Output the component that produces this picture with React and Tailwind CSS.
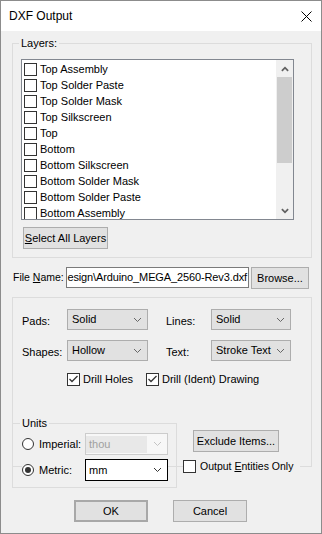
import React from "react";

const layers = [
    "Top Assembly",
    "Top Solder Paste",
    "Top Solder Mask",
    "Top Silkscreen",
    "Top",
    "Bottom",
    "Bottom Silkscreen",
    "Bottom Solder Mask",
    "Bottom Solder Paste",
    "Bottom Assembly",
];

function Chevron({ up, color = "#666666", width = 9, thick }) {
    const pts = up ? "1,5 4.5,1.5 8,5" : "1,1 4.5,4.5 8,1";
    return (
        <svg width={width} height="6" viewBox="0 0 9 6">
            <polyline points={pts} fill="none" stroke={color} strokeWidth={thick ? 2 : 1} />
        </svg>
    );
}

function CheckBox({ checked }) {
    return (
        <span className="flex h-[13px] w-[13px] shrink-0 items-center justify-center border border-[#333333] bg-white">
            {checked && (
                <svg width="11" height="11" viewBox="0 0 11 11">
                    <polyline points="1.5,5 4,7.5 9.5,2" fill="none" stroke="#333333" strokeWidth="1.3" />
                </svg>
            )}
        </span>
    );
}

function Radio({ checked }) {
    return (
        <span className="flex h-[12px] w-[12px] shrink-0 items-center justify-center rounded-full border border-[#333333] bg-white">
            {checked && <span className="h-[6px] w-[6px] rounded-full bg-[#333333]" />}
        </span>
    );
}

function Button({ children, className = "" }) {
    return (
        <div className={"flex h-[22px] items-center justify-center whitespace-nowrap border border-[#adadad] bg-[#e1e1e1] " + className}>
            {children}
        </div>
    );
}

function Combo({ value, className = "" }) {
    return (
        <div className={"flex h-[21px] items-center justify-between border border-[#adadad] bg-[#e1e1e1] pl-[4px] pr-[5px] " + className}>
            <span className="whitespace-nowrap">{value}</span>
            <Chevron />
        </div>
    );
}

export default function App() {
    return (
        <div className="h-[534px] w-[322px] overflow-hidden border border-[#8c8c8c] bg-[#f0f0f0] font-['Liberation_Sans',Arial,sans-serif] text-[11px] leading-[13px] text-black">
            {/* title bar */}
            <div className="flex h-[30px] items-center justify-between bg-white pl-[8px] pr-[9px]">
                <span className="text-[12px]">DXF Output</span>
                <svg width="11" height="11" viewBox="0 0 11 11">
                    <path d="M0.5 0.5 L10.5 10.5 M10.5 0.5 L0.5 10.5" stroke="#000" strokeWidth="1" />
                </svg>
            </div>

            {/* layers */}
            <fieldset className="ml-[11px] mt-[6px] w-[300px] border border-[#dcdcdc] pb-[8px] pl-[8px] pt-[9px]">
                <legend className="-ml-0.5 px-0.5 leading-[13px]">Layers:</legend>
                <div className="flex h-[161px] w-[273px] overflow-hidden border border-[#828790] bg-white">
                    <div className="flex-1 pt-px">
                        {layers.map((l) => (
                            <div key={l} className="flex h-4 items-center gap-[3px] pl-[2px]">
                                <CheckBox />
                                <span className="whitespace-nowrap">{l}</span>
                            </div>
                        ))}
                    </div>
                    <div className="flex w-[17px] flex-col bg-[#f0f0f0]">
                        <div className="flex h-[17px] items-center justify-center">
                            <Chevron up thick color="#606060" width={8} />
                        </div>
                        <div className="mx-px h-[86px] bg-[#cdcdcd]" />
                        <div className="flex-1" />
                        <div className="flex h-[17px] items-center justify-center">
                            <svg width="8" height="6" viewBox="0 0 9 6">
                                <polyline points="1,1 4.5,4.5 8,1" fill="none" stroke="#606060" strokeWidth="2" />
                            </svg>
                        </div>
                    </div>
                </div>
                <Button className="ml-0.5 mt-[7px] w-[85px]">
                    <span>
                        <u>S</u>elect All Layers
                    </span>
                </Button>
            </fieldset>

            {/* file name */}
            <div className="ml-[12px] mt-[9px] flex items-start">
                <div className="flex h-[21px] w-[53px] shrink-0 items-center whitespace-nowrap text-[10.5px]">
                    <span>
                        File <u>N</u>ame:
                    </span>
                </div>
                <div className="flex h-[21px] w-[183px] shrink-0 items-center justify-end border border-[#7a7a7a] bg-white pr-[1px]">
                    <span className="whitespace-nowrap tracking-[-0.12px]">esign\Arduino_MEGA_2560-Rev3.dxf</span>
                </div>
                <Button className="ml-[2px] w-[58px] shrink-0">Browse...</Button>
            </div>

            {/* options */}
            <div className="ml-[11px] mt-[8px] w-[300px] border border-[#dcdcdc] pl-[9px] pt-[11px]">
                <div className="grid grid-cols-[45px_81px_63px_80px] gap-y-[10px]">
                    <span className="pt-[6px]">Pads:</span>
                    <Combo value="Solid" className="w-[81px]" />
                    <span className="pl-[18px] pt-[6px]">Lines:</span>
                    <Combo value="Solid" className="w-[80px]" />
                    <span className="pt-[6px]">Shapes:</span>
                    <Combo value="Hollow" className="w-[81px]" />
                    <span className="pl-[18px] pt-[6px]">Text:</span>
                    <Combo value="Stroke Text" className="w-[80px] pr-[4px]" />
                </div>

                <div className="mt-[12px] flex h-[13px] items-center pl-[45px]">
                    <div className="flex w-[79px] items-center gap-[3px]">
                        <CheckBox checked />
                        <span>Drill Holes</span>
                    </div>
                    <div className="flex items-center gap-[3px]">
                        <CheckBox checked />
                        <span className="whitespace-nowrap">Drill (Ident) Drawing</span>
                    </div>
                </div>

                <div className="-mb-[22px] -ml-[10px] mt-[31px] flex items-start">
                    <fieldset className="w-[165px] border border-[#dcdcdc] pb-[6px] pl-[9px] pt-[3px]">
                        <legend className="-ml-0.5 px-0.5 leading-[13px]">Units</legend>
                        <div className="flex h-[22px] items-stretch">
                            <div className="flex w-[63px] items-center gap-[5px] bg-[#f0f0f0]">
                                <Radio />
                                <span>Imperial:</span>
                            </div>
                            <div className="flex w-[83px] items-center justify-between border border-[#cccccc] bg-[#f7f7f7] pr-[5px]">
                                <span className="flex h-[17px] w-[61px] items-center bg-[#e8e8e8] pl-[3px] text-[#a0a0a0]">thou</span>
                                <Chevron color="#c4c4c4" />
                            </div>
                        </div>
                        <div className="mt-[4px] flex h-[22px] items-stretch">
                            <div className="flex w-[63px] items-center gap-[5px] bg-[#f0f0f0]">
                                <Radio checked />
                                <span>Metric:</span>
                            </div>
                            <div className="flex w-[83px] items-center justify-between border border-black bg-white pl-[3px] pr-[5px]">
                                <span>mm</span>
                                <Chevron color="#333333" />
                            </div>
                        </div>
                    </fieldset>

                    <div className="ml-[6px] flex flex-col">
                        <Button className="ml-[10px] mt-[13px] w-[86px]">Exclude Items...</Button>
                        <div className="mt-[6px] flex h-[17px] w-[117px] items-center gap-[4px] bg-[#f0f0f0]">
                            <CheckBox />
                            <span className="whitespace-nowrap text-[10.5px]">
                                Output <u>E</u>ntities Only
                            </span>
                        </div>
                    </div>
                </div>
            </div>

            {/* dialog buttons */}
            <div className="mt-[33px] flex gap-[25px] pl-[73px]">
                <div className="flex h-[22px] w-[74px] items-center justify-center border-2 border-[#a8a8a8] bg-[#e1e1e1]">OK</div>
                <Button className="w-[74px]">Cancel</Button>
            </div>
        </div>
    );
}
